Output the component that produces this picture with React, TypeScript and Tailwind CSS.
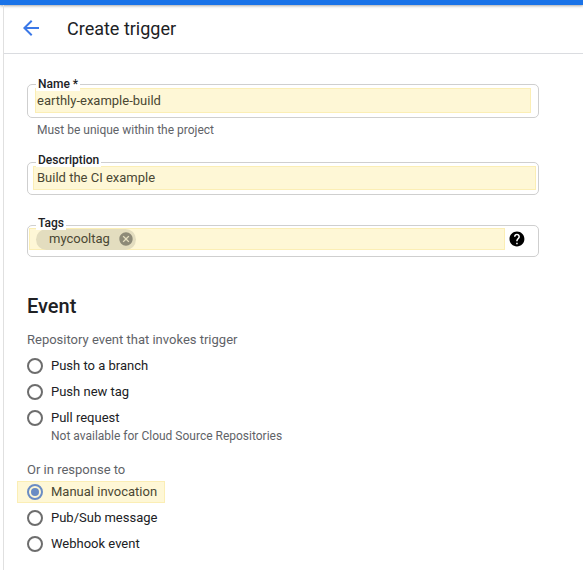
import React from "react";

function Radio({ checked = false }: { checked?: boolean }) {
  return (
    <span
      className={
        "flex h-[16px] w-[16px] shrink-0 items-center justify-center rounded-full border-2 " +
        (checked ? "border-[#6a8cc4]" : "border-[#6d6d6d]")
      }
    >
      {checked ? <span className="h-[8px] w-[8px] rounded-full bg-[#6a8cc4]" /> : null}
    </span>
  );
}

function RadioRow({ label }: { label: string }) {
  return (
    <div className="flex h-[26px] items-center gap-[8px] text-[13px] text-[#202124]">
      <Radio />
      <span>{label}</span>
    </div>
  );
}

function Field({
  label,
  children,
  top,
  labelTop,
}: {
  label: string;
  children: React.ReactNode;
  top?: string;
  labelTop: string;
}) {
  return (
    <div className={"relative w-[512px] rounded-[5px] border border-[#cfcfcf] " + (top ?? "")}>
      <span
        className={
          "absolute left-[8px] bg-white px-[2px] text-[12px] font-medium leading-[14px] text-[#202124] " + labelTop
        }
      >
        {label}
      </span>
      {children}
    </div>
  );
}

export default function App() {
  return (
    <div
      className="relative h-[570px] w-[583px] overflow-hidden bg-white"
      style={{ fontFamily: "Roboto, 'Liberation Sans', sans-serif" }}
    >
      <div className="h-[5px] w-full bg-[#1a73e8] shadow-[0_1px_3px_rgba(0,0,0,0.35)]" />
      <div className="ml-[3px] flex h-[565px] flex-col border-l border-[#e0e0e0]">
        <div className="flex h-[49px] shrink-0 items-center border-b border-[#dadce0] pl-[15px]">
          <svg width="24" height="24" viewBox="0 0 24 24" className="mt-[-2px]">
            <path d="M20 11H7.83l5.59-5.59L12 4l-8 8 8 8 1.41-1.41L7.83 13H20v-2z" fill="#3b78e7" />
          </svg>
          <span className="ml-[24px] mt-[-2px] text-[18px] text-[#202124]">Create trigger</span>
        </div>

        <div className="flex flex-col pl-[23px]">
          <Field label="Name *" top="mt-[30px]" labelTop="top-[-8px]">
            <div className="px-[7px] pb-[4px] pt-[3px]">
              <div className="flex h-[25px] items-center border border-[#fbeeb5] bg-[#fef7d6] pl-[1px] text-[13px] text-[#4a4733]">
                earthly-example-build
              </div>
            </div>
          </Field>
          <div className="ml-[10px] mt-[4px] text-[12px] leading-[16px] text-[#5f6368]">
            Must be unique within the project
          </div>

          <Field label="Description" top="mt-[24px]" labelTop="top-[-10px]">
            <div className="pb-[4px] pl-[5px] pr-[2px] pt-[3px]">
              <div className="flex h-[24px] items-center border border-[#fbeeb5] bg-[#fef7d6] pl-[3px] text-[13px] text-[#4a4733]">
                Build the CI example
              </div>
            </div>
          </Field>

          <Field label="Tags" top="mt-[30px]" labelTop="top-[-10px]">
            <div className="flex items-center pb-[6px] pl-[1px] pr-[12px] pt-[2px]">
              <div className="flex h-[22px] w-[479px] items-center border border-[#fbeeb5] bg-[#fef7d6] pl-[6px]">
                <div className="flex h-[21px] items-center rounded-full bg-[#e3ddbf] pl-[13px] pr-[2px]">
                  <span className="text-[13px] text-[#4a4733]">mycooltag</span>
                  <svg width="16" height="16" viewBox="0 0 24 24" className="ml-[8px]">
                    <path
                      d="M12 2C6.47 2 2 6.47 2 12s4.47 10 10 10 10-4.47 10-10S17.53 2 12 2zm5 13.59L15.59 17 12 13.41 8.41 17 7 15.59 10.59 12 7 8.41 8.41 7 12 10.59 15.59 7 17 8.41 13.41 12 17 15.59z"
                      fill="#8d8a78"
                    />
                  </svg>
                </div>
              </div>
              <svg width="18" height="18" viewBox="0 0 24 24" className="ml-[3px]">
                <path
                  d="M12 2C6.48 2 2 6.48 2 12s4.48 10 10 10 10-4.48 10-10S17.52 2 12 2zm1 17h-2v-2h2v2zm2.07-7.75l-.9.92C13.45 12.9 13 13.5 13 15h-2v-.5c0-1.1.45-2.1 1.17-2.83l1.24-1.26c.37-.36.59-.86.59-1.41 0-1.1-.9-2-2-2s-2 .9-2 2H8c0-2.21 1.79-4 4-4s4 1.79 4 4c0 .88-.36 1.68-.93 2.25z"
                  fill="#000"
                />
              </svg>
            </div>
          </Field>

          <div className="mt-[37px] text-[20px] font-medium leading-[24px] text-[#202124]">Event</div>
          <div className="mt-[14px] text-[13px] leading-[16px] text-[#5f6368]">
            Repository event that invokes trigger
          </div>
          <div className="mt-[5px] flex flex-col">
            <RadioRow label="Push to a branch" />
            <RadioRow label="Push new tag" />
            <RadioRow label="Pull request" />
            <div className="ml-[24px] mt-[-3px] text-[12px] leading-[16px] text-[#5f6368]">
              Not available for Cloud Source Repositories
            </div>
          </div>

          <div className="mt-[18px] text-[13px] leading-[16px] text-[#5f6368]">Or in response to</div>
          <div className="mt-[1px] flex flex-col">
            <div className="flex h-[26px] items-center">
              <div className="ml-[-10px] flex h-[22px] items-center gap-[8px] border border-[#fbeeb5] bg-[#fef7d6] pl-[9px] pr-[7px] text-[13px] text-[#4a4733]">
                <Radio checked />
                <span>Manual invocation</span>
              </div>
            </div>
            <RadioRow label="Pub/Sub message" />
            <RadioRow label="Webhook event" />
          </div>
        </div>
      </div>
    </div>
  );
}
